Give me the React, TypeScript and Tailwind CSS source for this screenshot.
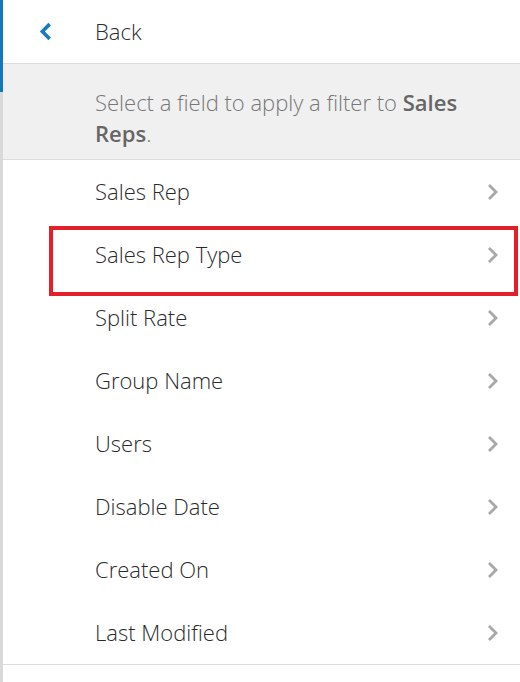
import React from "react";

const fields = [
    "Sales Rep",
    "Sales Rep Type",
    "Split Rate",
    "Group Name",
    "Users",
    "Disable Date",
    "Created On",
    "Last Modified",
];

const Chevron = ({ dir, className, weight = 2.8 }: { dir: "left" | "right"; className?: string; weight?: number }) => (
    <svg className={className} viewBox="0 0 12 18" fill="none" stroke="currentColor" strokeWidth={weight}
         strokeLinecap="butt" strokeLinejoin="miter">
        {dir === "right" ? <path d="M2.5 2 L9.5 9 L2.5 16"/> : <path d="M9.5 2 L2.5 9 L9.5 16"/>}
    </svg>
);

const App = () => {
    return (
        <div className="flex h-[682px] w-[520px] overflow-hidden bg-white font-['Open_Sans','Noto_Sans',sans-serif] font-light">
            {/* edge of the page underneath the flyout */}
            <div className="flex w-[3px] flex-col">
                <div className="h-[92px] bg-[#1277bd]"/>
                <div className="flex-1 bg-[#d9d9d9]"/>
            </div>

            <div className="relative flex-1">
                <div className="flex h-[64px] items-center border-b border-[#dcdcdc]">
                    <Chevron dir="left" weight={3.4} className="ml-[36px] h-[19px] w-[14px] shrink-0 text-[#1a7ac0]"/>
                    <span className="ml-[42px] text-[22px] text-[#2b2b2b]">Back</span>
                </div>

                <div className="h-[96px] border-b border-[#dcdcdc] bg-[#f0f0f0] pl-[92px] pr-[30px] pt-[23px]">
                    <p className="text-[22px] leading-[31px] text-[#777]">
                        Select a field to apply a filter to <span className="font-semibold text-[#666]">Sales Reps</span>.
                    </p>
                </div>

                <ul className="border-b border-[#dcdcdc]">
                    {fields.map((f) => (
                        <li key={f} className="flex h-[63px] items-center justify-between pl-[92px] pr-[21px]">
                            <span className="text-[22px] text-[#2b2b2b]">{f}</span>
                            <Chevron dir="right" className="h-[18px] w-[13px] shrink-0 text-[#a8a8a8]"/>
                        </li>
                    ))}
                </ul>

                {/* highlight around the second field */}
                <div className="pointer-events-none absolute left-[46px] top-[226px] h-[70px] w-[469px] border-4 border-[#e3202a]"/>
            </div>
        </div>
    );
};

export default App;
